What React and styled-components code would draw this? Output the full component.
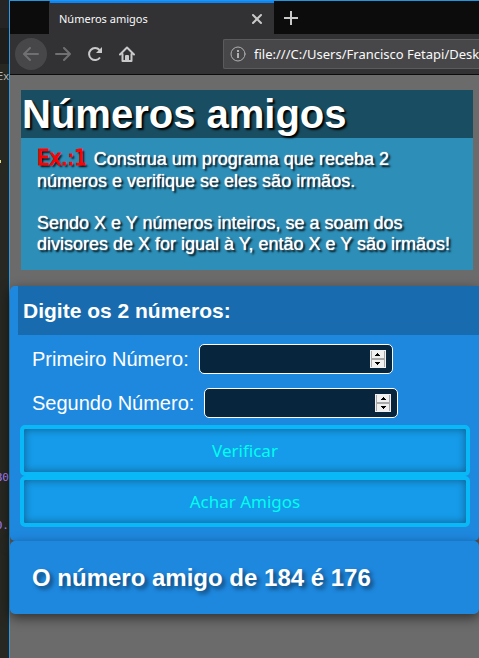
import React, { useState } from "react";
import styled, { createGlobalStyle } from "styled-components";

const Global = createGlobalStyle`
  *, *::before, *::after { box-sizing: border-box; }
  body { margin: 0; background: #272822; font-family: "Liberation Sans", Arial, sans-serif; }
  h1, h2, p { margin: 0; }
`;

const Desktop = styled.div`
  display: flex;
  height: 100vh;
  overflow: hidden;
`;

const EditorStrip = styled.aside`
  flex: none;
  display: flex;
  flex-direction: column;
  align-items: flex-end;
  width: 9px;
  overflow: hidden;
  background: linear-gradient(#252526 28px, #1e1f1c 28px, #1e1f1c 64px, #272822 64px);
`;

const EditorGap = styled.div`
  flex: none;
  height: ${(p) => p.$size}px;
`;

const EditorText = styled.span`
  flex: none;
  height: 16px;
  font: 11px/16px ${(p) => p.$font || '"DejaVu Sans Mono", monospace'};
  color: ${(p) => p.$color};
`;

const EditorMark = styled.span`
  flex: none;
  align-self: flex-start;
  width: 1px;
  height: 3px;
  background: #e6db74;
`;

const BrowserWindow = styled.div`
  flex: 1;
  min-width: 0;
  display: flex;
  flex-direction: column;
  border-top: 1px solid #2196e3;
  border-left: 1px solid #2f9be6;
`;

const TabBar = styled.div`
  flex: none;
  display: flex;
  height: 33px;
  background: #0c0c0d;
`;

const HiddenTab = styled.div`
  width: 40px;
  border-right: 1px solid #343437;
`;

const Tab = styled.div`
  display: flex;
  align-items: center;
  justify-content: space-between;
  width: 224px;
  padding: 0 9px;
  border-top: 2px solid #0a84ff;
  background: #323234;
  color: #f9f9fa;
  font: 11px/16px "Noto Sans", sans-serif;
`;

const IconButton = styled.button`
  display: flex;
  align-items: center;
  justify-content: center;
  width: ${(p) => p.$size}px;
  height: ${(p) => p.$size}px;
  padding: 0;
  border: 0;
  border-radius: 50%;
  background: ${(p) => (p.$filled ? "#474749" : "transparent")};
  color: ${(p) => (p.$muted ? "#707072" : "#c9c9ca")};
`;

const Toolbar = styled.div`
  flex: none;
  display: flex;
  align-items: center;
  height: 41px;
  padding: 0 0 0 5px;
  border-bottom: 1px solid #0c0c0d;
  background: #323234;
`;

const NavButtons = styled.div`
  flex: none;
  display: flex;
  width: 208px;
`;

const AddressBar = styled.label`
  flex: 1;
  min-width: 0;
  display: flex;
  align-items: center;
  gap: 8px;
  height: 30px;
  padding-left: 6px;
  border: 1px solid #5b5b5d;
  border-right: 0;
  border-radius: 2px 0 0 2px;
  background: #474749;
  color: #b1b1b3;
  svg { flex: none; }
`;

const AddressInput = styled.input`
  flex: 1;
  min-width: 0;
  padding: 0;
  border: 0;
  outline: 0;
  background: transparent;
  color: #f9f9fa;
  font: 13px/20px "Noto Sans", sans-serif;
`;

const Page = styled.main`
  flex: 1;
  background: #6b6b6b;
`;

const Intro = styled.section`
  margin: 15px 6px 16px 11px;
  background: #2d8eb7;
  color: #fff;
`;

const Title = styled.h1`
  padding-left: 1px;
  background: #194d61;
  font-size: 40px;
  line-height: 48px;
  text-shadow: 2px 2px 2px #000;
`;

const Statement = styled.div`
  padding: 7px 16px 15px;
  font-size: 18px;
  line-height: 21px;
  text-shadow: 0 0 1px #fff, 2px 2px 2px #000;
`;

const Paragraph = styled.p`
  & + & { margin-top: 21px; }
`;

const Tag = styled.strong`
  display: inline-block;
  margin-right: 2px;
  color: #f00;
  font: 22px/26px "DejaVu Sans Condensed", "DejaVu Sans", sans-serif;
  -webkit-text-stroke: 1px #f00;
  text-shadow: 2px 2px 2px #000;
`;

const Card = styled.section`
  position: relative;
  border-radius: 5px;
  background: #1e88df;
  color: #fff;
  box-shadow: 0 4px 12px rgba(0, 0, 0, 0.55);
`;

const Form = styled.form`
  padding: 0 0 14px 8px;
`;

const FormTitle = styled.h2`
  padding-left: 5px;
  background: #186bae;
  font-size: 21px;
  line-height: 49px;
`;

const Fields = styled.div`
  display: flex;
  flex-direction: column;
  gap: 14px;
  padding: 9px 14px 7px;
`;

const Field = styled.div`
  display: flex;
  align-items: center;
  gap: 10px;
  font-size: 20px;
  line-height: 28px;
`;

const NumberBox = styled.div`
  display: flex;
  align-items: center;
  width: 194px;
  height: 30px;
  padding: 0 6px 0 8px;
  border: 1px solid #fff;
  border-radius: 5px;
  background: #07263d;
`;

const NumberInput = styled.input`
  flex: 1;
  min-width: 0;
  height: 26px;
  padding: 0;
  border: 0;
  outline: 0;
  background: transparent;
  color: #fff;
  font-size: 18px;
  appearance: textfield;
  &::-webkit-inner-spin-button { display: none; }
`;

const Spinner = styled.div`
  display: flex;
  flex-direction: column;
  width: 16px;
  height: 18px;
  border: 1px solid #f0f0f0;
  background: #a9a9a9;
  gap: 2px;
`;

const Step = styled.button`
  flex: 1;
  display: flex;
  align-items: center;
  justify-content: center;
  padding: 0;
  border: 0;
  margin: 0 1px;
  background: #f0f0f0;
  color: #000;
`;

const Actions = styled.div`
  display: flex;
  flex-direction: column;
  padding: 0 9px 0 2px;
`;

const Action = styled.button`
  height: 51px;
  border: 4px solid #08b8f7;
  border-radius: 5px;
  background: #159be9;
  color: #00fff0;
  font: 17px/24px "Noto Sans", sans-serif;
  box-shadow: inset 0 0 8px rgba(0, 0, 0, 0.4);
`;

const Result = styled.p`
  padding: 22px 22px 21px;
  font-size: 24px;
  line-height: 30px;
  font-weight: bold;
  text-shadow: 3px 3px 4px rgba(0, 0, 0, 0.5);
`;

function NumberField({ id, label }) {
  const [value, setValue] = useState("");
  const step = (n) => setValue(String(Number(value) + n));
  return (
    <Field>
      <label htmlFor={id}>{label}</label>
      <NumberBox>
        <NumberInput id={id} type="number" value={value} onChange={(e) => setValue(e.target.value)} />
        <Spinner>
          <Step type="button" aria-label="Aumentar" onClick={() => step(1)}>
            <svg width="5" height="3" viewBox="0 0 5 3" shapeRendering="crispEdges"><path d="M2 0h1v1h1v1h1v1H0V2h1V1h1z" fill="currentColor" /></svg>
          </Step>
          <Step type="button" aria-label="Diminuir" onClick={() => step(-1)}>
            <svg width="5" height="3" viewBox="0 0 5 3" shapeRendering="crispEdges"><path d="M0 0h5v1H4v1H3v1H2V2H1V1H0z" fill="currentColor" /></svg>
          </Step>
        </Spinner>
      </NumberBox>
    </Field>
  );
}

const Stroke = ({ size = 16, width = 2, children }) => (
  <svg width={size} height={size} viewBox="0 0 16 16" fill="none" stroke="currentColor" strokeWidth={width} strokeLinecap="round" strokeLinejoin="round">
    {children}
  </svg>
);

export default function App() {
  return (
    <Desktop>
      <Global />
      <EditorStrip aria-hidden="true">
        <EditorGap $size={68} />
        <EditorText $color="#b5b5b0" $font='"Noto Sans", sans-serif'>Ex</EditorText>
        <EditorGap $size={76} />
        <EditorMark />
        <EditorGap $size={307} />
        <EditorText $color="#ae81ff">80</EditorText>
        <EditorGap $size={32} />
        <EditorText $color="#ae81ff">0.</EditorText>
      </EditorStrip>
      <BrowserWindow>
        <TabBar>
          <HiddenTab />
          <Tab>
            <span>Números amigos</span>
            <IconButton $size={16} aria-label="Fechar aba">
              <Stroke><path d="M4 4l8 8M12 4l-8 8" /></Stroke>
            </IconButton>
          </Tab>
          <IconButton $size={33} aria-label="Nova aba">
            <Stroke><path d="M8 1v14M1 8h14" strokeLinecap="butt" /></Stroke>
          </IconButton>
        </TabBar>
        <Toolbar>
          <NavButtons>
            <IconButton $size={32} $filled $muted aria-label="Voltar">
              <Stroke><path d="M15 8H1.500M7 2L1 8l6 6" /></Stroke>
            </IconButton>
            <IconButton $size={32} $muted aria-label="Avançar">
              <Stroke><path d="M1 8h13.500M9 2l6 6-6 6" /></Stroke>
            </IconButton>
            <IconButton $size={32} aria-label="Recarregar">
              <Stroke>
                <path d="M13 11.500A6 6 0 1 1 12.500 4" strokeLinecap="butt" />
                <path d="M15 1v6H9z" fill="currentColor" stroke="none" />
              </Stroke>
            </IconButton>
            <IconButton $size={32} aria-label="Página inicial">
              <Stroke>
                <path d="M1 8.500L8 1.500l7 7M3.500 8v7h9V8" />
                <path d="M7 15v-5h2v5" />
              </Stroke>
            </IconButton>
          </NavButtons>
          <AddressBar>
            <Stroke width={1}>
              <circle cx="8" cy="8" r="7" />
              <path d="M8 7v5M8 4v2" strokeWidth="2" strokeLinecap="butt" />
            </Stroke>
            <AddressInput aria-label="Endereço" defaultValue="file:///C:/Users/Francisco Fetapi/Desktop" />
          </AddressBar>
        </Toolbar>
        <Page>
          <Intro>
            <Title>Números amigos</Title>
            <Statement>
              <Paragraph>
                <Tag>Ex.:1</Tag> Construa um programa que receba 2 números e verifique se eles são irmãos.
              </Paragraph>
              <Paragraph>
                Sendo X e Y números inteiros, se a soam dos divisores de X for igual à Y, então X e Y são irmãos!
              </Paragraph>
            </Statement>
          </Intro>
          <Card>
            <Form onSubmit={(e) => e.preventDefault()}>
              <FormTitle>Digite os 2 números:</FormTitle>
              <Fields>
                <NumberField id="primeiro" label="Primeiro Número:" />
                <NumberField id="segundo" label="Segundo Número:" />
              </Fields>
              <Actions>
                <Action type="button">Verificar</Action>
                <Action type="button">Achar Amigos</Action>
              </Actions>
            </Form>
          </Card>
          <Card>
            <Result>O número amigo de 184 é 176</Result>
          </Card>
        </Page>
      </BrowserWindow>
    </Desktop>
  );
}
